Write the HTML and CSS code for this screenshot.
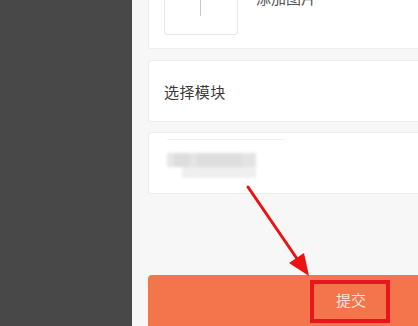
FILE: index.html
```html
<!DOCTYPE html>
<html>
<head>
<meta charset="utf-8">
<link rel="stylesheet" href="styles.css">
</head>
<body>
<div class="app">
  <aside class="side"></aside>
  <main class="main">
    <section class="card card-upload">
      <div class="upload-box"><span class="plus-v"></span></div>
      <span class="upload-label">添加图片</span>
    </section>
    <section class="card card-select">
      <span class="select-label">选择模块</span>
    </section>
    <section class="card card-blur">
      <div class="blur-line"></div>
      <div class="blur-area">
        <div class="blur-row r1"></div>
        <div class="blur-row r2"></div>
      </div>
    </section>
    <div class="spacer"></div>
    <div class="submit-bar">
      <span class="submit-text">提交</span>
    </div>
  </main>
  <svg class="annot" width="418" height="326" viewBox="0 0 418 326">
    <line x1="248" y1="187" x2="302" y2="266" stroke="#ee1111" stroke-width="3" stroke-linecap="round"/>
    <polygon points="309,276 289,263 304,253" fill="#ee1111"/>
    <rect x="312" y="282" width="76" height="39" fill="none" stroke="#e8151d" stroke-width="4"/>
  </svg>
</div>
</body>
</html>
```
FILE: styles.css
```css
html, body {
  margin: 0;
  padding: 0;
  overflow: hidden;
}
body {
  width: 418px;
  height: 326px;
  font-family: "Noto Sans CJK SC", "Noto Sans", sans-serif;
  background: #f7f7f7;
}
.app {
  position: relative;
  display: flex;
  width: 418px;
  height: 326px;
  overflow: hidden;
}
.side {
  width: 132px;
  flex: none;
  background: #484848;
}
.main {
  flex: 1;
  display: flex;
  flex-direction: column;
  padding-left: 16px;
  background: #f7f7f7;
  min-width: 0;
}
.card {
  background: #fff;
  border: 1px solid #ededed;
  border-right: none;
  border-radius: 3px 0 0 3px;
  box-sizing: border-box;
  flex: none;
}
.card-upload {
  margin-top: -56px;
  height: 105px;
  display: flex;
  align-items: flex-start;
  padding: 16px 0 0 15px;
  gap: 18px;
}
.upload-box {
  width: 74px;
  height: 74px;
  box-sizing: border-box;
  border: 1px solid #e6e6e6;
  border-radius: 3px;
  position: relative;
}
.plus-v {
  position: absolute;
  left: 35px;
  top: 30px;
  width: 1px;
  height: 24px;
  background: #c8c8c8;
}
.upload-label {
  margin-top: 27px;
  font-size: 15px;
  line-height: 20px;
  color: #555;
}
.card-select {
  margin-top: 11px;
  height: 62px;
  display: flex;
  align-items: center;
  padding-left: 15px;
}
.select-label {
  font-size: 15px;
  color: #3a3a3a;
  letter-spacing: 0.4px;
}
.card-blur {
  margin-top: 10px;
  height: 62px;
  padding: 6px 0 0 18px;
}
.blur-line {
  width: 118px;
  height: 1px;
  background: #f0f0f0;
  filter: blur(0.5px);
}
.blur-area {
  margin-top: 13px;
  filter: blur(1.6px);
  width: 89px;
}
.blur-row {
  height: 14px;
}
.r1 {
  background: linear-gradient(90deg, #e6e6e6 0 8%, #dddddd 8% 26%, #e4e4e4 26% 34%, #dedede 34% 84%, #e3e3e3 84% 100%);
}
.r2 {
  height: 11px;
  margin-left: 15px;
  background: #efefef;
}
.spacer {
  height: 81px;
  flex: none;
}
.submit-bar {
  flex: none;
  height: 60px;
  background: #f4754b;
  border-radius: 4px 0 0 0;
  display: flex;
  padding-left: 188px;
  padding-top: 14px;
  box-sizing: border-box;
}
.submit-text {
  font-size: 15px;
  color: #fbe3d9;
  line-height: 22px;
}
.annot {
  position: absolute;
  left: 0;
  top: 0;
  pointer-events: none;
}
```
